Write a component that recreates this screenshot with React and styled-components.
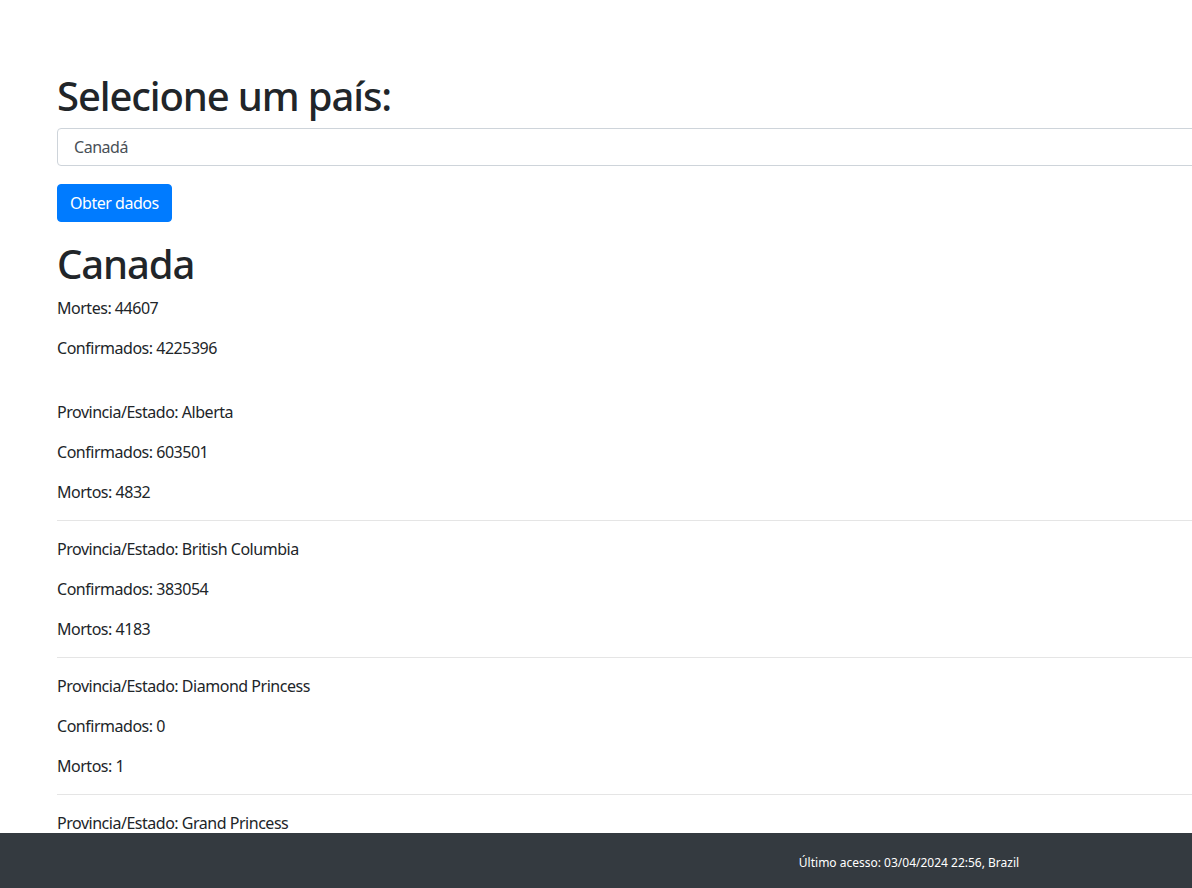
import React from "react";
import styled, { createGlobalStyle } from "styled-components";

const GlobalStyle = createGlobalStyle`
  html, body {
    margin: 0;
    overflow: hidden;
    background: #fff;
  }
  body {
    font-family: "Segoe UI", "Noto Sans", "Open Sans", sans-serif;
    font-size: 16px;
    line-height: 1.5;
    letter-spacing: -0.03em;
    color: #212529;
  }
  * { box-sizing: border-box; }
`;

const Page = styled.div`
  width: 1818px;
  padding: 72px 57px 80px;
`;

const Heading = styled.h1`
  margin: 0 0 8px;
  font-size: 40px;
  font-weight: 500;
  line-height: 1.2;
  letter-spacing: -0.028em;
`;

const Select = styled.select`
  display: block;
  width: 100%;
  height: 38px;
  padding: 6px 12px;
  font: inherit;
  letter-spacing: inherit;
  color: #495057;
  background: #fff;
  border: 1px solid #ced4da;
  border-radius: 4px;
  margin-bottom: 18px;
`;

const Button = styled.button`
  display: inline-block;
  height: 38px;
  padding: 6px 12px;
  font: inherit;
  letter-spacing: inherit;
  color: #fff;
  background: #007bff;
  border: 1px solid #007bff;
  border-radius: 4px;
  cursor: pointer;
`;

const Result = styled.section`
  margin-top: 18px;
`;

const Text = styled.p`
  margin: 0 0 16px;
`;

const ProvinceList = styled.div`
  padding-top: 24px;
`;

const Divider = styled.hr`
  margin: 16px 0;
  border: 0;
  border-top: 1px solid rgba(0, 0, 0, 0.1);
`;

const Footer = styled.footer`
  position: fixed;
  left: 0;
  bottom: 0;
  width: 1818px;
  height: 55px;
  padding-top: 4px;
  display: flex;
  align-items: center;
  justify-content: center;
  background: #343a40;
  color: #fff;
  font-size: 12px;
  letter-spacing: 0;
`;

const provinces = [
  { name: "Alberta", confirmed: 603501, deaths: 4832 },
  { name: "British Columbia", confirmed: 383054, deaths: 4183 },
  { name: "Diamond Princess", confirmed: 0, deaths: 1 },
  { name: "Grand Princess", confirmed: 13, deaths: 0 },
  { name: "Manitoba", confirmed: 150919, deaths: 2304 },
  { name: "New Brunswick", confirmed: 74290, deaths: 467 },
];

export default function App() {
  return (
    <>
      <GlobalStyle />
      <Page>
        <Heading>Selecione um país:</Heading>
        <Select defaultValue="CA">
          <option value="BR">Brasil</option>
          <option value="CA">Canadá</option>
          <option value="US">Estados Unidos</option>
        </Select>
        <Button>Obter dados</Button>

        <Result>
          <Heading>Canada</Heading>
          <Text>Mortes: 44607</Text>
          <Text>Confirmados: 4225396</Text>

          <ProvinceList>
            {provinces.map((p, i) => (
              <div key={p.name}>
                {i > 0 && <Divider />}
                <Text>Provincia/Estado: {p.name}</Text>
                <Text>Confirmados: {p.confirmed}</Text>
                <Text>Mortos: {p.deaths}</Text>
              </div>
            ))}
          </ProvinceList>
        </Result>
      </Page>
      <Footer>Último acesso: 03/04/2024 22:56, Brazil</Footer>
    </>
  );
}
